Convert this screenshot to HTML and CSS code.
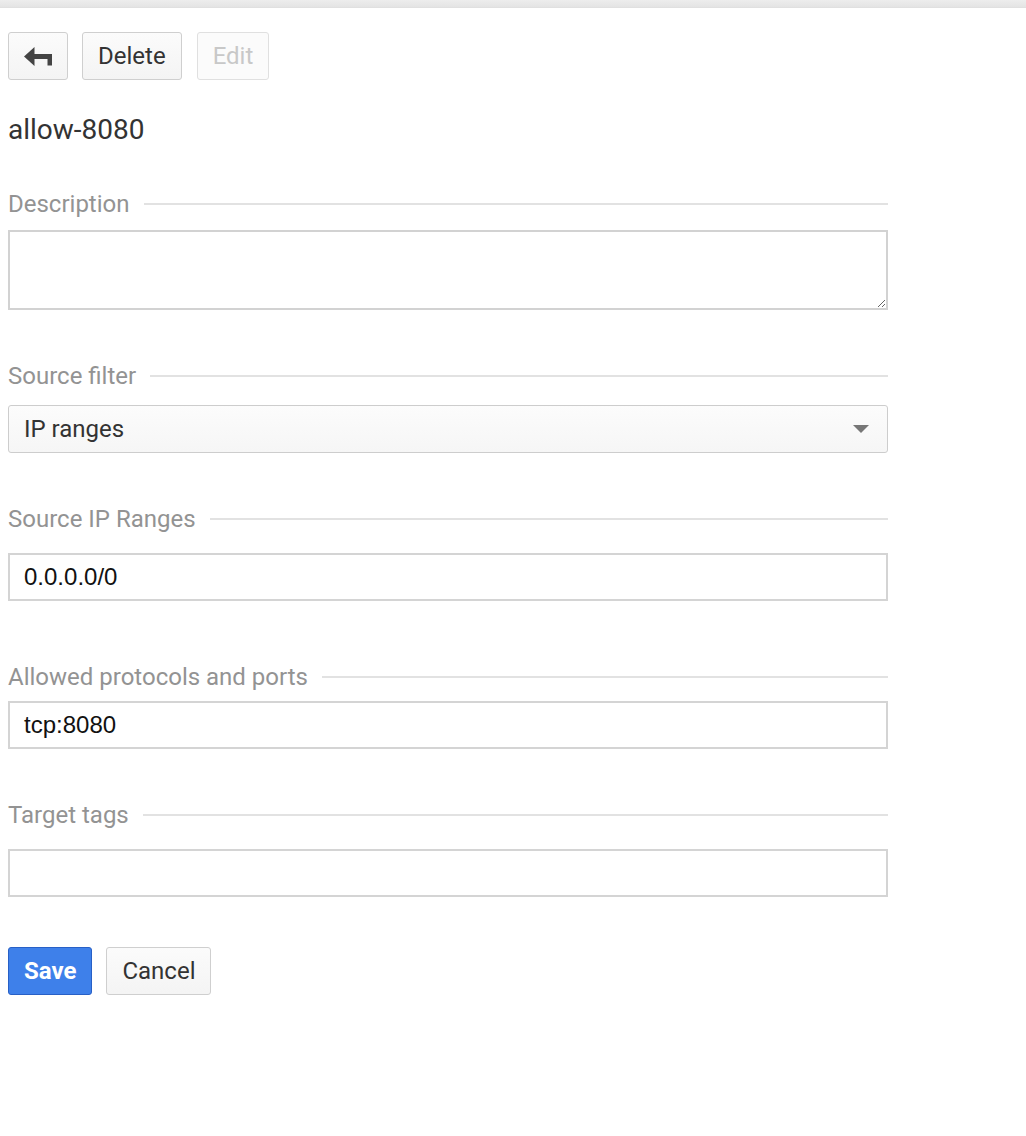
FILE: index.html
```html
<!DOCTYPE html>
<html>
<head>
<meta charset="utf-8">
<link rel="stylesheet" href="styles.css">
</head>
<body>
<div class="topbar"></div>
<main class="page">
  <div class="toolbar">
    <button class="btn btn-back" aria-label="Back">
      <svg width="28" height="19" viewBox="0 0 28 19"><path d="M0 9.5 L10.5 0 L10.5 19 Z" fill="#444"/><rect x="9" y="7" width="19" height="5" fill="#444"/><rect x="23.5" y="7" width="4.5" height="11.5" fill="#444"/></svg>
    </button>
    <button class="btn">Delete</button>
    <button class="btn btn-disabled">Edit</button>
  </div>
  <h1 class="title">allow-8080</h1>

  <section class="field f-desc">
    <div class="label"><span>Description</span></div>
    <textarea class="textarea"></textarea>
  </section>

  <section class="field f-filter">
    <div class="label"><span>Source filter</span></div>
    <div class="select"><span>IP ranges</span><span class="caret"></span></div>
  </section>

  <section class="field f-ip">
    <div class="label"><span>Source IP Ranges</span></div>
    <div class="input">0.0.0.0/0</div>
  </section>

  <section class="field f-ports">
    <div class="label"><span>Allowed protocols and ports</span></div>
    <div class="input">tcp:8080</div>
  </section>

  <section class="field f-tags">
    <div class="label"><span>Target tags</span></div>
    <div class="input"></div>
  </section>

  <div class="actions">
    <button class="btn btn-primary">Save</button>
    <button class="btn">Cancel</button>
  </div>
</main>
</body>
</html>
```

FILE: styles.css
```css
html, body {
  margin: 0;
  padding: 0;
  background: #fff;
  font-family: Roboto, "Liberation Sans", Arial, sans-serif;
}

.topbar {
  height: 7px;
  background: linear-gradient(#ededed, #e4e4e4);
  border-bottom: 1px solid #e0e0e0;
}

.page {
  padding: 24px 8px 0 8px;
  width: 880px;
}

.toolbar {
  display: flex;
  gap: 14px;
}

.btn {
  box-sizing: border-box;
  height: 48px;
  padding: 0 15px;
  border: 1px solid #cfcfcf;
  border-radius: 3px;
  background: linear-gradient(#fbfbfb, #f4f4f4);
  font-family: Roboto, "Liberation Sans", Arial, sans-serif;
  font-size: 24px;
  color: #333;
  display: flex;
  align-items: center;
  justify-content: center;
}

.btn-back {
  width: 60px;
  padding: 0;
}

.btn-disabled {
  color: #c8c8c8;
  border-color: #e0e0e0;
  background: #fbfbfb;
  margin-left: 1px;
}

.title {
  margin: 34px 0 0 0;
  font-size: 28px;
  line-height: 32px;
  font-weight: 400;
  color: #333;
}

.field { display: block; }

.label {
  display: flex;
  align-items: center;
  gap: 14px;
  height: 28px;
  font-size: 24px;
  color: #939393;
}
.label::after {
  content: "";
  flex: 1;
  height: 2px;
  background: #e2e2e2;
}

.f-desc { margin-top: 44px; }
.f-desc .label { margin-bottom: 12px; }
.f-filter { margin-top: 52px; }
.f-filter .label { margin-bottom: 15px; }
.f-ip { margin-top: 52px; }
.f-ip .label { margin-bottom: 20px; }
.f-ports { margin-top: 62px; }
.f-ports .label { margin-bottom: 10px; }
.f-tags { margin-top: 52px; }
.f-tags .label { margin-bottom: 20px; }

.textarea {
  display: block;
  box-sizing: border-box;
  width: 880px;
  height: 80px;
  margin: 0;
  border: 2px solid #d2d2d2;
  border-radius: 0;
  resize: vertical;
  font-size: 22px;
}

.select {
  box-sizing: border-box;
  height: 48px;
  border: 1px solid #cdcdcd;
  border-radius: 3px;
  background: linear-gradient(#fcfcfc, #f6f6f6);
  display: flex;
  align-items: center;
  justify-content: space-between;
  padding: 0 18px 0 15px;
  font-size: 24px;
  color: #333;
}
.caret {
  width: 0;
  height: 0;
  border-left: 8px solid transparent;
  border-right: 8px solid transparent;
  border-top: 8px solid #777;
}

.input {
  box-sizing: border-box;
  height: 48px;
  border: 2px solid #d4d4d4;
  display: flex;
  align-items: center;
  padding: 0 14px;
  font-family: "Liberation Sans", Arial, sans-serif;
  font-size: 24px;
  color: #111;
}

.actions {
  display: flex;
  gap: 14px;
  margin-top: 50px;
}

.btn-primary {
  background: #3e80ea;
  border-color: #2860c6;
  color: #fff;
  font-weight: 700;
  padding: 0 15px;
}
```
